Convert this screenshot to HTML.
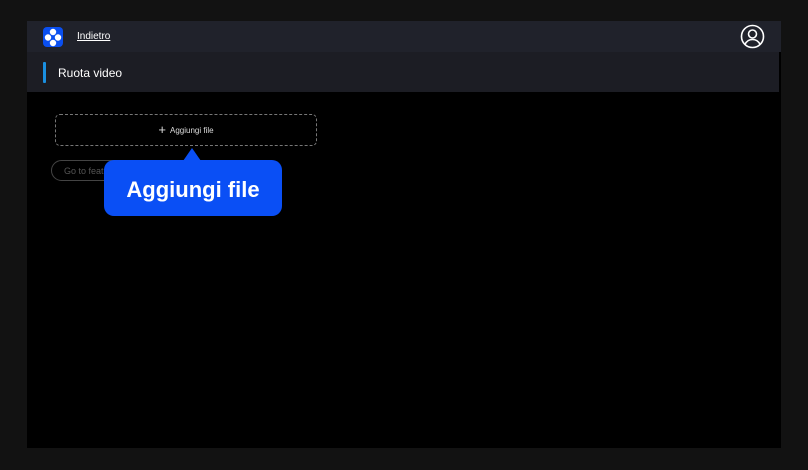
<!DOCTYPE html>
<html><head><style>
body{margin:0;width:808px;height:470px;background:#121212;position:relative;overflow:hidden;font-family:"Liberation Sans",sans-serif}
.panel{position:absolute;left:27px;top:21px;width:754px;height:427px;background:#000}
.hdr{position:absolute;left:0;top:0;width:754px;height:31px;background:#20222b}
.sub{position:absolute;left:0;top:31px;width:752px;height:40px;background:#1c1d24}
</style></head><body>
<div class="panel">
 <div class="hdr">
  <svg style="position:absolute;left:16px;top:6px" width="20" height="20" viewBox="0 0 20 20"><rect width="20" height="20" rx="4" fill="#0a4ff0"/><circle cx="10" cy="5" r="3.2" fill="#fff"/><circle cx="5" cy="10.5" r="3.2" fill="#fff"/><circle cx="15" cy="10.5" r="3.2" fill="#fff"/><circle cx="10" cy="16" r="3.2" fill="#fff"/></svg>
  <span style="position:absolute;left:50px;top:10px;color:#fff;font-size:10px;text-decoration:underline">Indietro</span>
  <svg style="position:absolute;left:713px;top:3px" width="25" height="25" viewBox="0 0 25 25" fill="none" stroke="#fff" stroke-width="1.6"><circle cx="12.5" cy="12.5" r="11"/><circle cx="12.5" cy="10" r="4"/><path d="M5 20.5c1.5-3.5 4.5-5 7.5-5s6 1.5 7.5 5"/></svg>
 </div>
 <div class="sub">
  <div style="position:absolute;left:16px;top:10px;width:3px;height:21px;background:#1a8fe0;border-radius:1px"></div>
  <span style="position:absolute;left:31px;top:14px;color:#fff;font-size:12px">Ruota video</span>
 </div>
 <div style="position:absolute;left:28px;top:93px;width:260px;height:30px;border:1px dashed #777;border-radius:5px;color:#ddd;font-size:8px;text-align:center;line-height:30px"><span style="font-size:13px;vertical-align:-1px">+</span>&nbsp; Aggiungi file</div>
 <div style="position:absolute;left:24px;top:139px;width:120px;height:21px;border:1px solid #444;border-radius:11px;color:#555;font-size:9px;line-height:21px;padding-left:12px;box-sizing:border-box">Go to feature</div>
 <div style="position:absolute;left:156px;top:127px;width:0;height:0;border-left:9px solid transparent;border-right:9px solid transparent;border-bottom:13px solid #0a4ff5"></div>
 <div style="position:absolute;left:77px;top:139px;width:178px;height:56px;background:#0a4ff5;border-radius:10px;color:#fff;font-weight:bold;font-size:22px;text-align:center;line-height:59px">Aggiungi file</div>
</div>
</body></html>
